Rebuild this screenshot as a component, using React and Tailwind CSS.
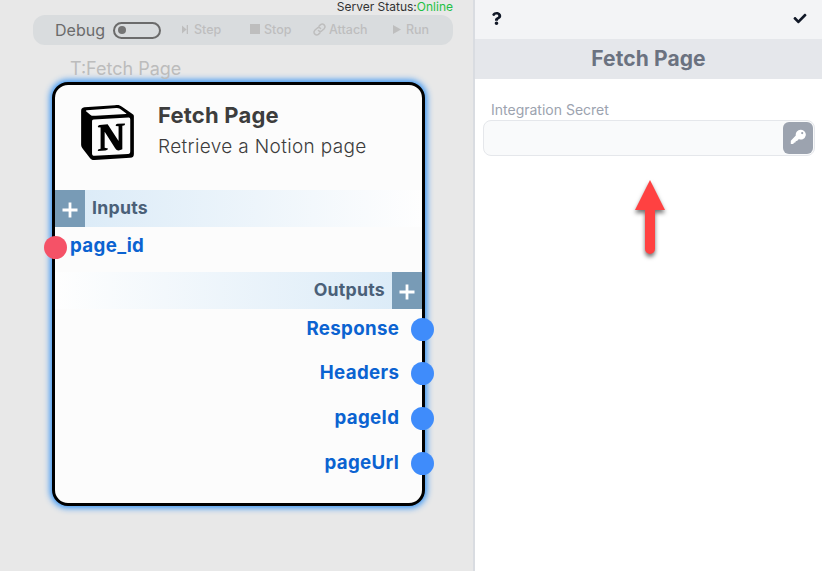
import { FaCheck, FaQuestion } from 'react-icons/fa';
import { SiNotion } from 'react-icons/si';

function ToolbarButton({ className, label, children }) {
  return (
    <div className={`flex items-center text-[12.5px] font-medium text-[#bebebe] ${className}`}>
      {children}
      <span className="whitespace-nowrap">{label}</span>
    </div>
  );
}

function Toolbar() {
  return (
    <div className="ml-[33px] flex h-[30px] w-[420px] items-center rounded-[12px] bg-[#d9dcde] pl-[22px]">
      <span className="mb-px w-[50px] text-[16px] leading-none text-[#6b6b6b]">Debug</span>
      <div className="ml-2 flex h-[17px] w-12 items-center rounded-full border-2 border-[#6b6b6b] pl-[3px]">
        <div className="h-2 w-2 rounded-full bg-[#757575]" />
      </div>
      <ToolbarButton label="Step" className="ml-[21px] w-[68px]">
        <svg className="mr-[6px] mb-0.5 h-[9px] w-[6px] shrink-0" viewBox="0 0 6 9" fill="currentColor">
          <path d="M0 0.500 4.600 4.500 0 8.500ZM4.700 0H6V9H4.700Z" />
        </svg>
      </ToolbarButton>
      <ToolbarButton label="Stop" className="w-[63px]">
        <div className="mr-1 mb-0.5 h-[10px] w-[10px] shrink-0 bg-[#bebebe]" />
      </ToolbarButton>
      <ToolbarButton label="Attach" className="w-[80px]">
        <svg className="mr-[3px] mb-px h-[13px] w-[13px] shrink-0" viewBox="0 0 24 24" fill="none" stroke="currentColor" strokeWidth="2.700" strokeLinecap="round">
          <path d="M10 14a5 5 0 0 0 7 0l4-4a5 5 0 0 0-7-7l-3 3" />
          <path d="M14 10a5 5 0 0 0-7 0l-4 4a5 5 0 0 0 7 7l3-3" />
        </svg>
      </ToolbarButton>
      <ToolbarButton label="Run">
        <svg className="mr-[5px] mb-0.5 h-[9px] w-2 shrink-0" viewBox="0 0 8 9" fill="currentColor">
          <path d="M0 0 8 4.500 0 9Z" />
        </svg>
      </ToolbarButton>
    </div>
  );
}

function PlusTile() {
  return (
    <div className="flex h-full w-[30px] shrink-0 items-center justify-center bg-[#789bb6] pt-[2px] text-white">
      <svg className="h-4 w-4" viewBox="0 0 16 16" stroke="currentColor" strokeWidth="2.800">
        <path d="M0.500 8H15.500M8 0.500V15.500" />
      </svg>
    </div>
  );
}

function Output({ label, className }) {
  return (
    <div className={`relative flex h-[22px] items-center justify-end pr-[23px] ${className}`}>
      <span className="-mr-[0.300px] text-[18.700px] font-bold leading-[22px] tracking-[0.350px] text-[#0b63d1]">{label}</span>
      <div className="absolute top-0 -right-3 h-[23px] w-[23px] rounded-full bg-[#3f8cfb]" />
    </div>
  );
}

function FetchNode() {
  return (
    <div className="ml-[52px] h-[424px] w-[373px] rounded-[16px] border-[3px] border-black bg-[#fcfcfc] shadow-[0_0_6px_2px_#3292f5]">
      <div className="flex h-[105px] pt-[20px] pl-[25px]">
        <SiNotion className="h-[55px] w-[55px] shrink-0 text-black" />
        <div className="-mt-[3px] ml-[23px]">
          <h2 className="text-[22px] font-bold leading-[26px] tracking-[0.200px] text-[#3d3d3d]">Fetch Page</h2>
          <p className="mt-[6px] whitespace-nowrap text-[19px] font-light leading-[26px] tracking-[0.350px] text-[#3d3d3d]">Retrieve a Notion page</p>
        </div>
      </div>
      <div className="flex h-[37px] items-center bg-linear-to-r from-[#d9eaf7] to-[#fefefe]">
        <PlusTile />
        <span className="ml-[7px] text-[17.700px] font-bold tracking-[0.250px] text-[#4a6078]">Inputs</span>
      </div>
      <div className="relative flex h-[45px] items-start pt-[8px] pl-[15px]">
        <div className="absolute top-[9px] -left-[11px] h-[23px] w-[23px] rounded-full bg-[#f55267]" />
        <span className="text-[18.700px] font-bold leading-[22px] tracking-[0.350px] text-[#0b63d1]">page_id</span>
      </div>
      <div className="flex h-[37px] items-center justify-end bg-linear-to-l from-[#d9eaf7] to-[#fefefe]">
        <span className="mr-[7px] text-[17.700px] font-bold tracking-[0.250px] text-[#4a6078]">Outputs</span>
        <PlusTile />
      </div>
      <Output label="Response" className="mt-[9px]" />
      <Output label="Headers" className="mt-[22px]" />
      <Output label="pageId" className="mt-[23px]" />
      <Output label="pageUrl" className="mt-[23px]" />
    </div>
  );
}

function SettingsPanel() {
  return (
    <aside className="flex min-w-0 flex-1 flex-col bg-white">
      <div className="flex h-[39px] items-center justify-between bg-[#f3f4f6] pr-[15px] pb-[2px] pl-[15px] text-[#111827]">
        <FaQuestion className="h-[13px] w-[13px]" />
        <FaCheck className="h-[13px] w-[14px]" />
      </div>
      <div className="flex h-10 items-center justify-center bg-[#e5e7eb] text-[21px] font-bold tracking-[0.100px] text-[#6b7280]">
        Fetch Page
      </div>
      <div className="mt-[21px] ml-4 text-[14px] leading-5 text-[#9ca3af]">Integration Secret</div>
      <div className="ml-2 flex h-9 w-[332px] items-center justify-end rounded-lg border border-[#e5e7eb] bg-[#f9fafb] pr-px">
        <button className="flex h-8 w-[30px] items-center justify-center rounded-[6px] bg-[#9ca3af] pb-0.5 text-white">
          <svg className="h-4 w-4" viewBox="0 0 16 16">
            <path
              fill="currentColor"
              fillRule="evenodd"
              d="M10.700.8a4.800 4.800 0 0 0-4.900 5.700L.8 11.700V15h2.400l.8-1.200 1.300-.2.500-1.400 1.500-.400 1.600-1.900A4.800 4.800 0 1 0 10.700.8ZM12.200 3a1.100 1.100 0 1 1 0 2.200 1.100 1.100 0 0 1 0-2.200Z"
            />
          </svg>
        </button>
      </div>
      <svg className="mt-[16px] ml-[147px] h-[100px] w-[56px]" viewBox="0 0 56 100">
        <g fill="#ff4141" style={{ filter: 'drop-shadow(0 3px 2px rgba(0,0,0,.55))' }}>
          <path d="M28 8 43 38H33V77a5 5 0 0 1-10 0V38H13Z" />
        </g>
      </svg>
    </aside>
  );
}

export default function App() {
  return (
    <div className="flex h-[571px] w-[822px] overflow-hidden bg-[#e8e8e8] font-['Inter',sans-serif]">
      <main className="w-[475px] shrink-0 border-r-2 border-[#d9dce1]">
        <div className="flex h-[15px] justify-end pr-5 text-[12px] leading-[14px] text-[#333]">
          Server Status:<span className="text-[#1fc143]">Online</span>
        </div>
        <Toolbar />
        <div className="h-[37px] pt-3 pl-[70px] text-[18px] leading-[24px] text-[#bcbcbc]">T:Fetch Page</div>
        <FetchNode />
      </main>
      <SettingsPanel />
    </div>
  );
}
